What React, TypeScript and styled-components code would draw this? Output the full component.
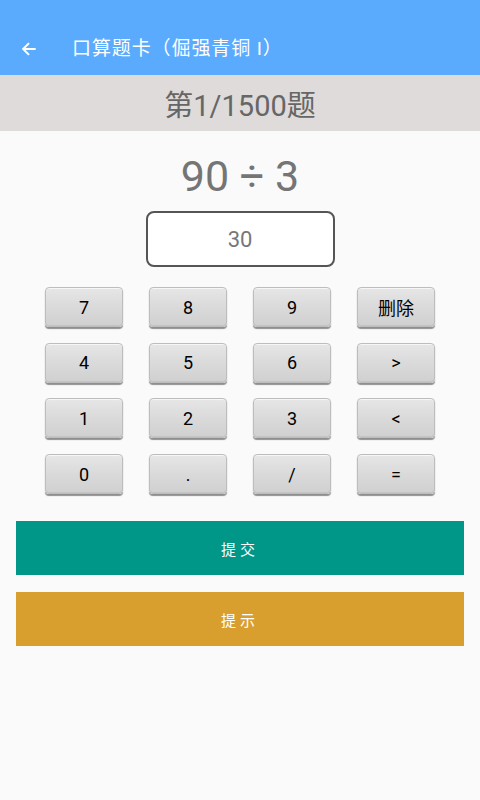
import React from 'react'
import styled, { createGlobalStyle } from 'styled-components'

const GlobalStyle = createGlobalStyle`
  html, body {
    margin: 0;
    padding: 0;
    background: #fafafa;
  }
  body {
    font-family: Roboto, "Noto Sans CJK SC", sans-serif;
  }
`

const Page = styled.div`
  width: 480px;
  min-height: 800px;
  background: #fafafa;
  display: flex;
  flex-direction: column;
`

const AppBar = styled.header`
  height: 75px;
  background: #5aabfd;
  display: flex;
  align-items: flex-end;
  padding: 0 0 15px 18px;
  box-sizing: border-box;
  color: #fff;
`

const BackButton = styled.span`
  width: 22px;
  height: 22px;
  display: flex;
  align-items: center;
  justify-content: center;
  margin-right: 32px;
`

const Title = styled.h1`
  margin: 0;
  font-size: 19px;
  font-weight: 400;
  line-height: 22px;
  letter-spacing: 0.9px;
`

const Progress = styled.div`
  height: 56px;
  background: #dedbda;
  color: #666;
  font-size: 29px;
  display: flex;
  align-items: center;
  justify-content: center;
`

const Question = styled.div`
  margin-top: 19px;
  height: 52px;
  font-size: 43px;
  color: #757575;
  display: flex;
  align-items: center;
  justify-content: center;
`

const Answer = styled.div`
  margin: 9px auto 0;
  width: 189px;
  height: 56px;
  box-sizing: border-box;
  border: 2px solid #555;
  border-radius: 8px;
  background: #fff;
  color: #777;
  font-size: 22px;
  display: flex;
  align-items: center;
  justify-content: center;
`

const Keypad = styled.div`
  margin: 20px 0 0 45px;
  display: grid;
  grid-template-columns: repeat(4, 78px);
  grid-auto-rows: 40px;
  column-gap: 26px;
  row-gap: 15.7px;
`

const Key = styled.button`
  box-sizing: border-box;
  border: 1px solid #bdbdbd;
  border-radius: 4px;
  background: linear-gradient(180deg, #e6e6e6 0%, #dadada 50%, #d0d0d0 100%);
  box-shadow: inset 0 1px 0 #f6f6f6, inset 0 -1px 0 #c4c4c4, 0 2px 1px #8f8f8f;
  color: #000;
  font-family: Roboto, "Noto Sans CJK SC", sans-serif;
  font-size: 18px;
  display: flex;
  align-items: center;
  justify-content: center;
  padding: 0;
`

const Actions = styled.div`
  margin-top: 27px;
  padding: 0 16px;
  display: flex;
  flex-direction: column;
  gap: 17px;
`

const ActionButton = styled.button<{ tone: string }>`
  height: 54px;
  border: none;
  background: ${(p) => p.tone};
  color: #fff;
  font-family: Roboto, "Noto Sans CJK SC", sans-serif;
  font-size: 15px;
  letter-spacing: 4px;
  display: flex;
  align-items: center;
  justify-content: center;
`

const keys = ['7', '8', '9', '删除', '4', '5', '6', '>', '1', '2', '3', '<', '0', '.', '/', '=']

const App = () => (
  <Page>
    <GlobalStyle />
    <AppBar>
      <BackButton>
        <svg width="20" height="20" viewBox="0 0 24 24" fill="none" stroke="#fff" strokeWidth="2.4">
          <path d="M20 12H5M12 5l-7 7 7 7" />
        </svg>
      </BackButton>
      <Title>口算题卡（倔强青铜 I）</Title>
    </AppBar>
    <Progress>第1/1500题</Progress>
    <Question>90 ÷ 3</Question>
    <Answer>30</Answer>
    <Keypad>
      {keys.map((k) => (
        <Key key={k}>{k}</Key>
      ))}
    </Keypad>
    <Actions>
      <ActionButton tone="#009688">提交</ActionButton>
      <ActionButton tone="#d99f2e">提示</ActionButton>
    </Actions>
  </Page>
)

export default App
